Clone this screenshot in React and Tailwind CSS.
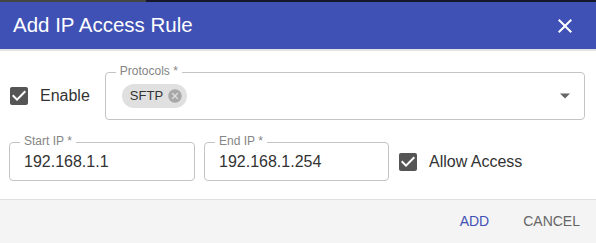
import React from "react";

function CheckBoxIcon() {
  return (
    <svg width="24" height="24" viewBox="0 0 24 24" className="shrink-0">
      <path fill="#555555" d="M19 3H5c-1.11 0-2 .9-2 2v14c0 1.1.89 2 2 2h14c1.11 0 2-.9 2-2V5c0-1.1-.89-2-2-2zm-9 14l-5-5 1.41-1.41L10 14.17l7.59-7.59L19 8l-9 9z" />
    </svg>
  );
}

function Outlined({ label, className, children }) {
  return (
    <div className={"relative border border-[#c4c4c4] rounded-[4px] " + className}>
      <span className="absolute left-[10px] top-[-8px] px-[4px] bg-white text-[12px] leading-[12px] text-[#858585]">
        {label}
      </span>
      {children}
    </div>
  );
}

export default function App() {
  return (
    <div className="w-[596px] h-[243px] flex flex-col bg-white overflow-hidden font-['Liberation_Sans',Arial,sans-serif]">
      <div className="h-[2px] flex">
        <div className="w-[146px] bg-[#454545]" />
        <div className="flex-1 bg-[#16172b]" />
      </div>
      <div className="h-[47px] bg-[#3f51b5] flex items-center justify-between pl-[13px] pr-[19px] text-white">
        <span className="text-[20.5px]">Add IP Access Rule</span>
        <svg width="24" height="24" viewBox="0 0 24 24">
          <path fill="#ffffff" d="M19 6.41L17.59 5 12 10.59 6.41 5 5 6.41 10.59 12 5 17.59 6.41 19 12 13.41 17.59 19 19 17.59 13.41 12z" />
        </svg>
      </div>
      <div className="h-[2px] bg-[#e3e3e3]" />
      <div className="flex-1 flex flex-col text-[#333333] text-[16px]">
        <div className="flex items-center mt-[21px] pl-[7px] pr-[11px]">
          <CheckBoxIcon />
          <span className="ml-[9px]">Enable</span>
          <Outlined label="Protocols *" className="ml-[15px] flex-1 h-[48px] flex items-center pl-[16px] pr-[14px]">
            <div className="h-[24px] rounded-full bg-[#e0e0e0] flex items-center pl-[8px] pr-[4px]">
              <span className="text-[13px] text-[#333333]">SFTP</span>
              <svg width="16" height="16" viewBox="0 0 24 24" className="ml-[4px]">
                <path fill="#a8a8a8" d="M12 2C6.47 2 2 6.47 2 12s4.47 10 10 10 10-4.47 10-10S17.53 2 12 2zm5 13.59L15.59 17 12 13.41 8.41 17 7 15.59 10.59 12 7 8.41 8.41 7 12 10.59 15.59 7 17 8.41 13.41 12 17 15.59z" />
              </svg>
            </div>
            <div className="flex-1" />
            <svg width="10" height="6" viewBox="0 0 10 5">
              <path fill="#666666" d="M0 0h10L5 5z" />
            </svg>
          </Outlined>
        </div>
        <div className="flex items-center mt-[22px] pl-[9px]">
          <Outlined label="Start IP *" className="w-[186px] h-[39px] flex items-center pl-[14px]">
            <span>192.168.1.1</span>
          </Outlined>
          <Outlined label="End IP *" className="ml-[9px] w-[185px] h-[39px] flex items-center pl-[14px]">
            <span>192.168.1.254</span>
          </Outlined>
          <div className="ml-[7px]">
            <CheckBoxIcon />
          </div>
          <span className="ml-[9px]">Allow Access</span>
        </div>
      </div>
      <div className="h-[44px] border-t border-[#e0e0e0] bg-[#f4f4f4] flex items-center justify-end pr-[16px] text-[14px]">
        <span className="text-[#3f51b5]">ADD</span>
        <span className="ml-[34px] text-[#666666]">CANCEL</span>
      </div>
    </div>
  );
}
